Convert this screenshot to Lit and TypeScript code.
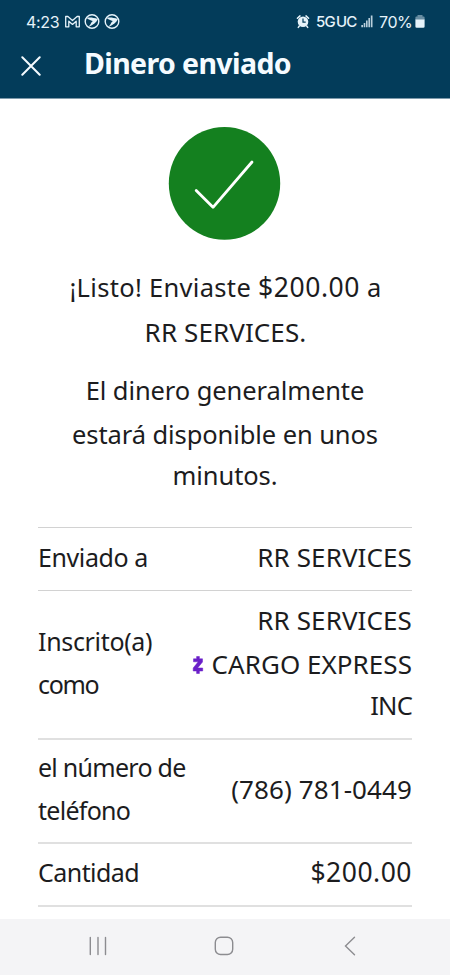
import {LitElement, html, css} from 'lit';
import {customElement} from 'lit/decorators.js';

@customElement('status-bar')
export class StatusBar extends LitElement {
  static styles = css`
    :host {
      display: flex;
      justify-content: space-between;
      height: 44px;
      box-sizing: border-box;
      padding: 12px 25px 0 26px;
      color: #e6f3fa;
      font-family: Inter, Roboto, sans-serif;
      font-size: 16px;
      line-height: 20px;
      white-space: nowrap;
    }

    .side {
      display: flex;
      align-items: flex-start;
    }

    svg {
      display: block;
      flex: none;
    }

    .time {
      width: 38px;
      letter-spacing: -0.3px;
    }

    .network {
      width: 45px;
      padding-left: 6px;
      font-size: 15px;
      font-weight: 500;
      letter-spacing: -0.75px;
    }

    .band {
      margin-left: 1px;
    }

    .percent {
      width: 36px;
      padding-left: 6px;
      letter-spacing: -0.4px;
    }
  `;

  render() {
    return html`
      <div class="side">
        <span class="time">4:23</span>
        <svg width="56" height="20" viewBox="64 12 56 20" fill="none">
          <path
            d="M65.7 26.8V16.5h2.2l4.6 4 4.6-4h2.2v10.3h-3.1v-5.6l-3.7 3.2-3.7-3.2v5.6z"
            stroke="#e6f3fa"
            stroke-width="1.3"
            stroke-linejoin="round"
          />
          ${[92, 112].map(
            (x) => html`<svg x=${x - 8} y="13.5" width="16" height="16" viewBox="0 0 16 16">
              <circle cx="8" cy="8" r="6.8" fill="none" stroke="#e6f3fa" stroke-width="1.4" />
              <path
                d="M2.5 4.3c3.2-.7 7-.3 11.3 1.2-1.3 3.6-4.5 6-9.3 7.9 1.2-1.6 2.2-2.8 2.7-4.2L8.8 7.5C6.5 7 4.4 6 2.5 4.3z"
                fill="#e6f3fa"
              />
            </svg>`
          )}
        </svg>
      </div>
      <div class="side">
        <svg width="14" height="20" viewBox="296 12 14 20" fill="none">
          <circle cx="303" cy="21.8" r="5.3" fill="#e6f3fa" />
          <path
            d="M297.4 18.3l2.6-2.4M308.6 18.3L306 15.9M299.3 26l-1 1.4M306.7 26l1 1.4"
            stroke="#e6f3fa"
            stroke-width="1.5"
            stroke-linecap="round"
          />
          <path d="M303 18.6v3.5h2.7" stroke="#033c5a" stroke-width="1.2" />
        </svg>
        <span class="network">5G<span class="band">UC</span></span>
        <svg width="12" height="20" viewBox="361 12 12 20" fill="#b9cfdb">
          <path
            d="M361.3 25h1.7v2.3h-1.7zM363.7 23h1.6v4.3h-1.6zM366 20.6h1.6v6.7H366zM368.4 18h1.6v9.3h-1.6zM370.8 15.4h1.7v11.9h-1.7z"
          />
        </svg>
        <span class="percent">70%</span>
        <svg width="10" height="20" viewBox="415 12 10 20">
          <path d="M417.5 15h5v1.5h1.1q1 0 1 1V20h-9.200v-2.5q0-1 1-1h1.100z" fill="#688da2" />
          <path d="M415.4 19.5h9.2v7q0 1.3-1.3 1.3h-6.600q-1.300 0-1.300-1.300z" fill="#e6f3fa" />
        </svg>
      </div>
    `;
  }
}

@customElement('nav-bar')
export class NavBar extends LitElement {
  static styles = css`
    :host {
      display: flex;
      align-items: center;
      justify-content: space-between;
      height: 56px;
      box-sizing: border-box;
      padding: 0 90px 2px 88px;
      background: #f4f4f6;
    }

    svg {
      display: block;
      fill: none;
      stroke: #8c8c90;
      stroke-width: 1.4;
      stroke-linecap: round;
    }
  `;

  render() {
    return html`
      <svg width="20" height="20" viewBox="0 0 20 20">
        <path d="M2.3 1.5v17M10 1.5v17M17.5 1.5v17" />
      </svg>
      <svg width="20" height="20" viewBox="0 0 20 20">
        <rect x="1.3" y="1.3" width="17.4" height="17.2" rx="5.3" />
      </svg>
      <svg width="20" height="20" viewBox="0 0 20 20">
        <path d="M14.5 1.3L5.5 10l9 8.7" />
      </svg>
    `;
  }
}

@customElement('app-root')
export class AppRoot extends LitElement {
  static styles = css`
    :host {
      display: flex;
      flex-direction: column;
      width: 450px;
      height: 975px;
      overflow: hidden;
      background: #fff;
      color: #1c1c1e;
      font-family: 'Noto Sans', sans-serif;
      font-size: 25.5px;
      white-space: nowrap;
    }

    svg {
      display: block;
      flex: none;
    }

    header {
      height: 98px;
      flex: none;
      background: #033c5a;
      border-bottom: 1px solid #7e9aab;
    }

    .titlebar {
      display: flex;
      align-items: flex-start;
      padding-left: 21px;
    }

    .close {
      margin-top: 12px;
    }

    h1 {
      margin: 0 0 0 43px;
      color: #f5fbff;
      font-size: 28.5px;
      font-weight: 700;
      line-height: 38px;
      letter-spacing: -0.61px;
    }

    main {
      flex: 1;
      padding: 28px 38px 0;
    }

    .badge {
      margin: 0 auto;
    }

    .message {
      margin: 0;
      text-align: center;
    }

    .message span {
      display: block;
      line-height: 44px;
    }

    .done {
      margin-top: 24px;
      padding-left: 1px;
      letter-spacing: 0.31px;
    }

    .done .payee {
      line-height: 46px;
      font-size: 26px;
      letter-spacing: 0.1px;
    }

    .done .amount {
      display: inline;
      font-size: 26.5px;
      letter-spacing: 0.56px;
    }

    .notice {
      margin-top: 14px;
      letter-spacing: -0.09px;
    }

    .notice .first {
      line-height: 43px;
    }

    .notice .last {
      line-height: 38px;
    }

    dl {
      margin: 33px 0 0;
      border-top: 1px solid #d2d2d2;
    }

    .row {
      display: flex;
      align-items: center;
      justify-content: space-between;
      padding: 7px 0 9px;
      border-bottom: 2px solid #e0e0e0;
    }

    dt {
      font-size: 25px;
      line-height: 43px;
    }

    dd {
      margin: 0;
      text-align: right;
      font-size: 26px;
      line-height: 45px;
      letter-spacing: 0.1px;
    }

    dt span,
    dd span {
      display: block;
    }

    .sent {
      padding-bottom: 10px;
      border-bottom: 1px solid #d2d2d2;
    }

    .sent dt {
      letter-spacing: -0.4px;
    }

    .enrolled {
      padding-bottom: 12px;
    }

    .enrolled dt {
      padding-top: 1px;
      letter-spacing: -0.33px;
    }

    .enrolled dt .second {
      letter-spacing: -1.3px;
    }

    .enrolled .brand {
      display: flex;
      align-items: center;
      justify-content: flex-end;
      gap: 8px;
      line-height: 42px;
      letter-spacing: 0.05px;
    }

    .zelle {
      margin-top: 2px;
    }

    .enrolled .last {
      font-size: 25.5px;
      line-height: 41px;
      letter-spacing: -0.8px;
    }

    .phone {
      padding: 6px 0 10px;
    }

    .phone dt {
      letter-spacing: -0.73px;
    }

    .phone dd {
      letter-spacing: 0.1px;
    }

    .total {
      padding: 6px 0 10px;
    }

    .total dt {
      line-height: 45px;
      letter-spacing: -0.55px;
    }

    .total dd {
      font-size: 26.5px;
      letter-spacing: 0.5px;
    }
  `;

  render() {
    return html`
      <header>
        <status-bar></status-bar>
        <div class="titlebar">
          <svg class="close" width="20" height="20" viewBox="0 0 20 20">
            <path
              d="M1.3 1.3l17.4 17.4M18.7 1.3L1.3 18.7"
              stroke="#f5fbff"
              stroke-width="2"
              stroke-linecap="round"
            />
          </svg>
          <h1>Dinero enviado</h1>
        </div>
      </header>
      <main>
        <svg class="badge" width="114" height="114" viewBox="0 0 114 114">
          <ellipse cx="56.5" cy="56.4" rx="55.7" ry="56.4" fill="#14801f" />
          <path
            d="M28.2 63.4L45 80.3l39-45.3"
            fill="none"
            stroke="#fff"
            stroke-width="2.8"
            stroke-linecap="round"
            stroke-linejoin="round"
          />
        </svg>
        <p class="message done">
          <span>¡Listo! Enviaste <span class="amount">$200.00</span> a</span>
          <span class="payee">RR SERVICES.</span>
        </p>
        <p class="message notice">
          <span class="first">El dinero generalmente</span>
          <span>estará disponible en unos</span>
          <span class="last">minutos.</span>
        </p>
        <dl>
          <div class="row sent">
            <dt>Enviado a</dt>
            <dd>RR SERVICES</dd>
          </div>
          <div class="row enrolled">
            <dt>
              <span>Inscrito(a)</span>
              <span class="second">como</span>
            </dt>
            <dd>
              <span>RR SERVICES</span>
              <span class="brand">
                <svg class="zelle" width="12" height="18" viewBox="0 0 12 18" fill="#6a1fc8">
                  <path
                    d="M4.6.5h2.8v2.3h3.1v3.2L5.6 12h5.1v3H7.4v2.5H4.6V15H1.2v-3L6.2 5.8H1.5v-3h3.1z"
                    stroke="#6a1fc8"
                    stroke-width=".5"
                    stroke-linejoin="round"
                  />
                </svg>
                CARGO EXPRESS
              </span>
              <span class="last">INC</span>
            </dd>
          </div>
          <div class="row phone">
            <dt>
              <span>el número de</span>
              <span>teléfono</span>
            </dt>
            <dd>(786) 781-0449</dd>
          </div>
          <div class="row total">
            <dt>Cantidad</dt>
            <dd>$200.00</dd>
          </div>
        </dl>
      </main>
      <nav-bar></nav-bar>
    `;
  }
}
